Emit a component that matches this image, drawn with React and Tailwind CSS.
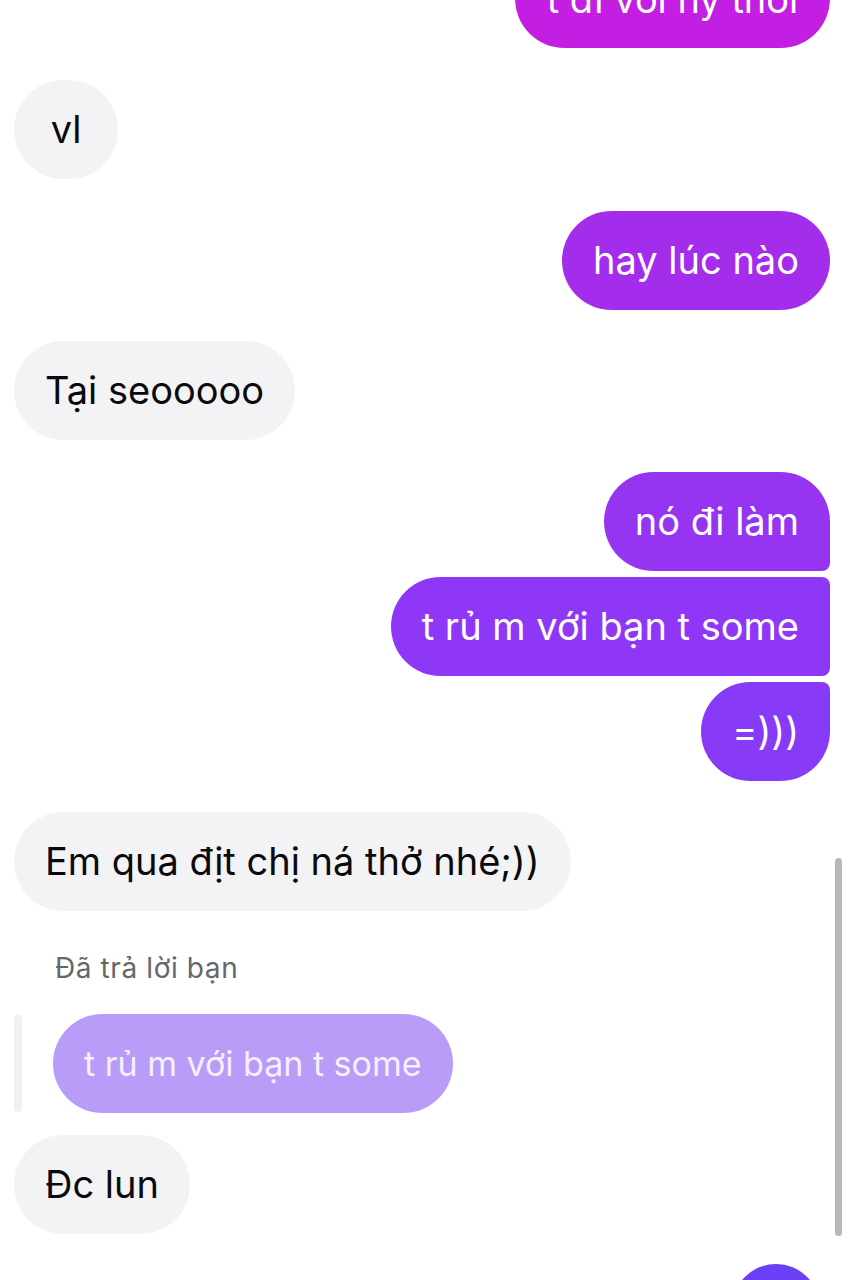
import React from 'react';

const font = { fontFamily: 'Inter, "Noto Sans", sans-serif' };

function Theirs({ children, className = '' }) {
  return (
    <div className={`self-start h-[99px] rounded-[50px] bg-[#f3f3f5] text-[#0a0a0a] px-[31px] flex items-center justify-center min-w-[104px] text-[38px] ${className}`}>
      {children}
    </div>
  );
}

function Mine({ children, color, corners = 'rounded-[50px]', className = '' }) {
  return (
    <div
      className={`self-end h-[99px] text-white px-[31px] flex items-center justify-center min-w-[104px] text-[38px] ${corners} ${color} ${className}`}
    >
      {children}
    </div>
  );
}

export default function App() {
  return (
    <div style={font} className="relative w-[850px] h-[1280px] overflow-hidden bg-white">
      <div className="flex flex-col pl-[14px] pr-[20px] -mt-[51px]">
        <Mine color="bg-[#c21fe2]" className="w-[315px] items-start pt-[31px]">
          <span className="leading-none">t đi với ny thôi</span>
        </Mine>

        <Theirs className="mt-[32px]">vl</Theirs>

        <Mine color="bg-[#a42ceb]" className="mt-[32px]">hay lúc nào</Mine>

        <Theirs className="mt-[31px]">Tại seooooo</Theirs>

        <Mine
          color="bg-[#9535f1]"
          corners="rounded-tl-[50px] rounded-bl-[50px] rounded-tr-[50px] rounded-br-[8px]"
          className="mt-[32px]"
        >
          nó đi làm
        </Mine>
        <Mine
          color="bg-[#8f37f6]"
          corners="rounded-tl-[50px] rounded-bl-[50px] rounded-tr-[8px] rounded-br-[8px]"
          className="mt-[6px]"
        >
          t rủ m với bạn t some
        </Mine>
        <Mine
          color="bg-[#883bf7]"
          corners="rounded-tl-[50px] rounded-bl-[50px] rounded-tr-[8px] rounded-br-[50px]"
          className="mt-[6px]"
        >
          =)))
        </Mine>

        <Theirs className="mt-[31px]">Em qua địt chị ná thở nhé;))</Theirs>

        <div className="mt-[42px] pl-[41px] text-[28px] tracking-[0.6px] text-[#65676b] leading-[30px]">Đã trả lời bạn</div>

        <div className="mt-[31px] flex items-stretch">
          <div className="w-[8px] h-[97px] self-center rounded-full bg-[#f0f0f2]" />
          <div className="ml-[31px] h-[99px] rounded-[50px] bg-[#b89cf8] text-[#f6effd] px-[31px] flex items-center text-[34px]">
            t rủ m với bạn t some
          </div>
        </div>

        <Theirs className="mt-[22px]">Đc lun</Theirs>

        <div className="self-end mt-[30px] mr-[10px] w-[88px] h-[99px] rounded-[50px] bg-[#6b3ff6]" />
      </div>

      <div className="absolute left-[835px] top-[858px] w-[7px] h-[378px] rounded-full bg-[#b7b7b7]" />
    </div>
  );
}
